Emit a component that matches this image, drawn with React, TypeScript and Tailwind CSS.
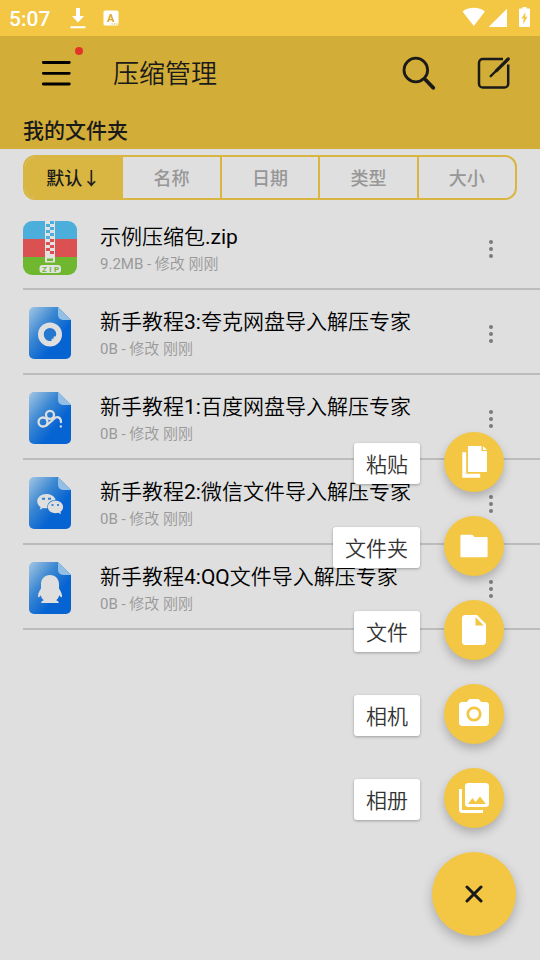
import { useState, type ReactNode } from 'react';
import clsx from 'clsx';
import { MdCameraAlt, MdInsertDriveFile, MdPhotoLibrary } from 'react-icons/md';

type Kind = 'zip' | 'quark' | 'baidu' | 'wechat' | 'qq';
type FileItem = { name: string; size: string; kind: Kind };

const files: FileItem[] = [
  { name: '示例压缩包.zip', size: '9.2MB', kind: 'zip' },
  { name: '新手教程3:夸克网盘导入解压专家', size: '0B', kind: 'quark' },
  { name: '新手教程1:百度网盘导入解压专家', size: '0B', kind: 'baidu' },
  { name: '新手教程2:微信文件导入解压专家', size: '0B', kind: 'wechat' },
  { name: '新手教程4:QQ文件导入解压专家', size: '0B', kind: 'qq' },
];

const sorts = ['默认', '名称', '日期', '类型', '大小'];

function ZipIcon() {
  return (
    <svg viewBox="0 0 54 54" className="size-[54px]" aria-hidden="true">
      <clipPath id="zip-clip">
        <rect width="54" height="54" rx="9" />
      </clipPath>
      <g clipPath="url(#zip-clip)">
        <rect width="54" height="18" fill="#4baedb" />
        <rect y="18" width="54" height="18" fill="#db5151" />
        <rect y="36" width="54" height="18" fill="#6eb72e" />
        <rect x="22" width="10" height="41.500" fill="#e2e2e2" />
        {Array.from({ length: 11 }, (_, i) => (
          <rect
            key={i}
            x={i % 2 ? 23 : 27}
            y={i * 3}
            width="4"
            height="3"
            fill={i < 6 ? '#4baedb' : '#db5151'}
          />
        ))}
        <rect x="24" y="37.500" width="6" height="2.500" fill="#6eb72e" />
        <rect x="16.500" y="44" width="21.500" height="8" rx="3" fill="#e2e2e2" />
        <g fill="#6eb72e" fontSize="8" fontWeight="700" fontFamily="Roboto, sans-serif" textAnchor="middle">
          <text x="21.500" y="50.800">Z</text>
          <text x="27.500" y="50.800">I</text>
          <text x="33.500" y="50.800">P</text>
        </g>
      </g>
    </svg>
  );
}

function DocMark({ kind }: { kind: Kind }) {
  if (kind === 'quark') {
    return (
      <>
        <circle cx="21" cy="27.500" r="12" fill="#dfdfdf" />
        <path
          d="M21 21a6.200 6.200 0 0 1 6.200 6.200c0 1-.3 1.800-.6 2.400h-2v2.200h-2v2.200c-4.800.6-7.800-2.800-7.800-6.800A6.200 6.200 0 0 1 21 21z"
          fill="#2578d0"
        />
      </>
    );
  }
  if (kind === 'baidu') {
    return (
      <g fill="none" stroke="#dfdfdf" strokeWidth="2.300" strokeLinecap="round">
        <circle cx="21" cy="22.800" r="4" />
        <circle cx="14" cy="30" r="4.500" />
        <path d="M17.500 33.500l9-8c3-1.200 5.800 1 5.500 4.500" />
        <path d="M31.800 34.300v.2" />
      </g>
    );
  }
  if (kind === 'wechat') {
    return (
      <>
        <path
          d="M17.500 17c-5.200 0-9.300 3.200-9.300 7.200 0 2.400 1.300 4.400 3.400 5.800l-.8 2.700 3.300-1.700c1.300.4 2.700.4 4.300.3-.8-5 3-8.300 8.200-8.300-.8-3.500-4.500-6-9.100-6z"
          fill="#dfdfdf"
        />
        <path
          d="M26.500 23.800c-4.300 0-7.700 2.700-7.700 6.200s3.400 6.200 7.700 6.200c1 0 1.900-.1 2.700-.4l2.800 1.400-.6-2.400c1.700-1.100 2.700-2.800 2.700-4.800 0-3.500-3.300-6.200-7.600-6.200z"
          fill="#dfdfdf"
        />
        <path d="M13 21.700h3M19 21.700h3" stroke="#347fcc" strokeWidth="2" />
        <path d="M22.500 28h2M28 28h2" stroke="#1169d0" strokeWidth="1.600" />
      </>
    );
  }
  return (
    <path
      d="M21 13c-5.500 0-9 4-9 9v4.500c-1.500 2.200-3 5-3 7.500 0 2 1 1.600 2.800-.8.5 2.200 1.500 3.800 3 5.100-1.600.6-2.600 1.400-2.600 2.700h17.600c0-1.300-1-2.100-2.600-2.700 1.500-1.300 2.500-2.900 3-5.100 1.800 2.400 2.800 2.800 2.800.8 0-2.500-1.500-5.300-3-7.500V22c0-5-3.500-9-9-9z"
      fill="#dfdfdf"
    />
  );
}

function DocIcon({ kind }: { kind: Kind }) {
  const id = `doc-${kind}`;
  return (
    <svg viewBox="0 0 42 52" className="h-[52px] w-[42px]" aria-hidden="true">
      <linearGradient id={id} x1="0" y1="0.050" x2="0.750" y2="0.800">
        <stop offset="0" stopColor="#9cc3e2" />
        <stop offset="0.450" stopColor="#3a86d2" />
        <stop offset="0.850" stopColor="#0563d2" />
      </linearGradient>
      <path d="M5 0h24l13 13v34a5 5 0 0 1-5 5H5a5 5 0 0 1-5-5V5a5 5 0 0 1 5-5z" fill={`url(#${id})`} />
      <path d="M29 0l13 13h-8a5 5 0 0 1-5-5z" fill="#93bfe4" />
      <DocMark kind={kind} />
    </svg>
  );
}

function StatusBar() {
  return (
    <div className="flex h-9 items-center bg-[#f3c643] pr-2 pl-[9px] text-white">
      <span className="pt-0.5 text-[21px] leading-[34px] font-medium">5:07</span>
      <svg viewBox="0 0 16 22" className="ml-5 h-[22px] w-4" fill="currentColor" aria-hidden="true">
        <path d="M6 1h4v8h4l-6 6.500L2 9h4zM.5 19.200h15v2H.5z" />
      </svg>
      <svg viewBox="0 0 16 16" className="ml-[17px] size-4" aria-hidden="true">
        <rect x=".5" y=".5" width="15" height="15" rx="1.500" fill="currentColor" />
        <text
          x="7.800"
          y="11.500"
          textAnchor="middle"
          fontSize="11"
          fontWeight="700"
          fill="#dda928"
          fontFamily="Roboto, sans-serif"
        >
          A
        </text>
        <path d="M8.500 14h1.200M11 14h1.200M13.300 14h1.200" stroke="#dda928" strokeWidth="1.200" />
      </svg>
      <svg viewBox="0 0 70 20" className="mb-0.5 ml-auto h-5 w-[70px]" fill="currentColor" aria-hidden="true">
        <path d="M.6 4.600C3.500 2 7.200.8 11.800.8S20 2 22.900 4.600L11.800 19z" />
        <path d="M45 1.800V20H26.600z" />
        <path
          fillRule="evenodd"
          d="M60.500 0h4v1.500H67c.6 0 1 .4 1 1V19c0 .6-.4 1-1 1h-9c-.6 0-1-.4-1-1V2.500c0-.6.4-1 1-1h2.500zm3 5l-4 6.500h2.300L61 17.500l4.500-7.700H63z"
        />
      </svg>
    </div>
  );
}

function TopBar() {
  return (
    <header className="bg-[#d2ad38] text-[#1a1a1a]">
      <div className="flex h-[74px] items-center pr-[22px] pl-8">
        <button type="button" aria-label="菜单" className="relative flex size-12 items-center justify-center">
          <svg viewBox="0 0 30 26" className="h-[26px] w-[30px] text-black" aria-hidden="true">
            <path
              d="M2.300 2.500h26M2.300 13.300h26M2.300 24h26"
              stroke="currentColor"
              strokeWidth="2.800"
              strokeLinecap="round"
            />
          </svg>
          <span className="absolute -top-0.5 right-[-3px] size-2 rounded-full bg-[#e3342b]" />
        </button>
        <h1 className="ml-[33px] pt-0.5 text-[26px] leading-9 font-[350]">压缩管理</h1>
        <button type="button" aria-label="搜索" className="ml-auto flex size-12 items-center justify-center">
          <svg
            viewBox="0 0 34 34"
            className="size-[34px]"
            fill="none"
            stroke="currentColor"
            strokeLinecap="round"
            aria-hidden="true"
          >
            <circle cx="13.800" cy="14" r="11.800" strokeWidth="2.800" />
            <path d="M22.500 22.800l1.500 1.500" strokeWidth="2.600" />
            <path d="M24 24.300l7.200 7.500" strokeWidth="3.800" />
          </svg>
        </button>
        <button type="button" aria-label="编辑" className="ml-[27px] flex size-12 items-center justify-center">
          <svg
            viewBox="0 0 34 34"
            className="size-[34px]"
            fill="none"
            stroke="currentColor"
            strokeLinecap="round"
            aria-hidden="true"
          >
            <path
              d="M26 3H5.800A3.800 3.800 0 0 0 2 6.800v21a3.800 3.800 0 0 0 3.800 3.800h21.600a3.800 3.800 0 0 0 3.800-3.800V8.500"
              strokeWidth="2.500"
              strokeLinecap="butt"
            />
            <path d="M31.200 3L19.500 14.600" strokeWidth="3.200" />
            <path d="M20 14l-6.300 6.200" strokeWidth="2.400" />
          </svg>
        </button>
      </div>
      <h2 className="pt-[3px] pl-[23px] text-[21px] leading-9 font-medium">我的文件夹</h2>
    </header>
  );
}

function FileRow({ file }: { file: FileItem }) {
  return (
    <li className="flex border-b-2 border-[#bcbcbc] pt-4 pb-[11px]">
      <div className="flex size-[54px] shrink-0 items-center justify-center">
        {file.kind === 'zip' ? <ZipIcon /> : <DocIcon kind={file.kind} />}
      </div>
      <div className="ml-[23px] min-w-0 flex-1">
        <p className="truncate text-[21px] leading-8 text-black">{file.name}</p>
        <p className="text-[15px] leading-[22px] text-[#999]">{file.size} - 修改 刚刚</p>
      </div>
      <button
        type="button"
        aria-label={`更多 ${file.name}`}
        className="mr-6 flex h-14 w-[50px] shrink-0 items-center justify-center text-[#7b7b7b]"
      >
        <svg viewBox="0 0 4 18" className="h-[18px] w-1" fill="currentColor" aria-hidden="true">
          <circle cx="2" cy="2" r="2" />
          <circle cx="2" cy="9" r="2" />
          <circle cx="2" cy="16" r="2" />
        </svg>
      </button>
    </li>
  );
}

function PasteIcon() {
  return (
    <svg viewBox="0 0 36 36" className="size-9" fill="currentColor" aria-hidden="true">
      <path d="M12 2h13.500v5H31v21H12z" />
      <path d="M27 2l4 4h-4z" />
      <path d="M6.300 8.300h3.900v21.400h14v4H6.300z" />
    </svg>
  );
}

function FolderIcon() {
  return (
    <svg viewBox="0 0 36 36" className="size-9" fill="currentColor" aria-hidden="true">
      <path d="M5.500 6.800h10.200c.8 0 1.300.3 1.700.9l.8 1.400h12.300c.7 0 1.100.4 1.100 1.100v18c0 .7-.4 1.100-1.100 1.100h-25c-.7 0-1.100-.4-1.100-1.100V7.900c0-.7.4-1.100 1.100-1.100z" />
    </svg>
  );
}

const actions: { label: string; icon: ReactNode }[] = [
  { label: '粘贴', icon: <PasteIcon /> },
  { label: '文件夹', icon: <FolderIcon /> },
  { label: '文件', icon: <MdInsertDriveFile className="size-9" /> },
  { label: '相机', icon: <MdCameraAlt className="size-9" /> },
  { label: '相册', icon: <MdPhotoLibrary className="size-9" /> },
];

function SpeedDial() {
  const [open, setOpen] = useState(true);

  return (
    <div className="absolute right-6 bottom-6 flex flex-col items-end gap-6">
      {open &&
        actions.map((a) => (
          <button key={a.label} type="button" className="mr-3 flex items-center gap-6">
            <span className="mt-0.5 rounded-[3px] bg-white px-3 pt-[3px] text-[21px] leading-[38px] font-[350] text-[#333] shadow-[0_1px_3px_rgba(0,0,0,0.3)]">
              {a.label}
            </span>
            <span className="flex size-[60px] items-center justify-center rounded-full bg-[#f3c643] text-white shadow-[0_5px_10px_rgba(0,0,0,0.22)]">
              {a.icon}
            </span>
          </button>
        ))}
      <button
        type="button"
        aria-label={open ? '关闭' : '添加'}
        onClick={() => setOpen(!open)}
        className="flex size-[84px] items-center justify-center rounded-full bg-[#f3c643] text-[#1a1a1a] shadow-[0_5px_12px_rgba(0,0,0,0.24)]"
      >
        <svg viewBox="0 0 18 18" className="size-[18px]" aria-hidden="true">
          <path d="M2 2l14 14M16 2L2 16" stroke="currentColor" strokeWidth="3" strokeLinecap="round" />
        </svg>
      </button>
    </div>
  );
}

export default function App() {
  const [sort, setSort] = useState('默认');

  return (
    <div
      lang="zh-CN"
      className="relative min-h-screen bg-[#dfdfdf] font-[Roboto,'Noto_Sans_CJK_SC',sans-serif]"
    >
      <StatusBar />
      <TopBar />
      <main>
        <div className="mx-[23px] mt-1.5 flex divide-x-2 divide-[#d9b542] overflow-hidden rounded-xl border-2 border-[#d9b542]">
          {sorts.map((s) => (
            <button
              key={s}
              type="button"
              aria-pressed={s === sort}
              onClick={() => setSort(s)}
              className={clsx(
                'flex-1 pt-0.5 text-[18px] leading-[39px] font-medium',
                s === sort ? 'bg-[#d9b542] text-[#1a1a1a]' : 'text-[#979797]',
              )}
            >
              {s}
              {s === sort && '↓'}
            </button>
          ))}
        </div>
        <ul className="mt-[5px] pl-[23px] font-[Roboto,'Noto_Sans_CJK_SC_DemiLight','Noto_Sans_CJK_SC',sans-serif]">
          {files.map((f) => (
            <FileRow key={f.name} file={f} />
          ))}
        </ul>
      </main>
      <SpeedDial />
    </div>
  );
}
